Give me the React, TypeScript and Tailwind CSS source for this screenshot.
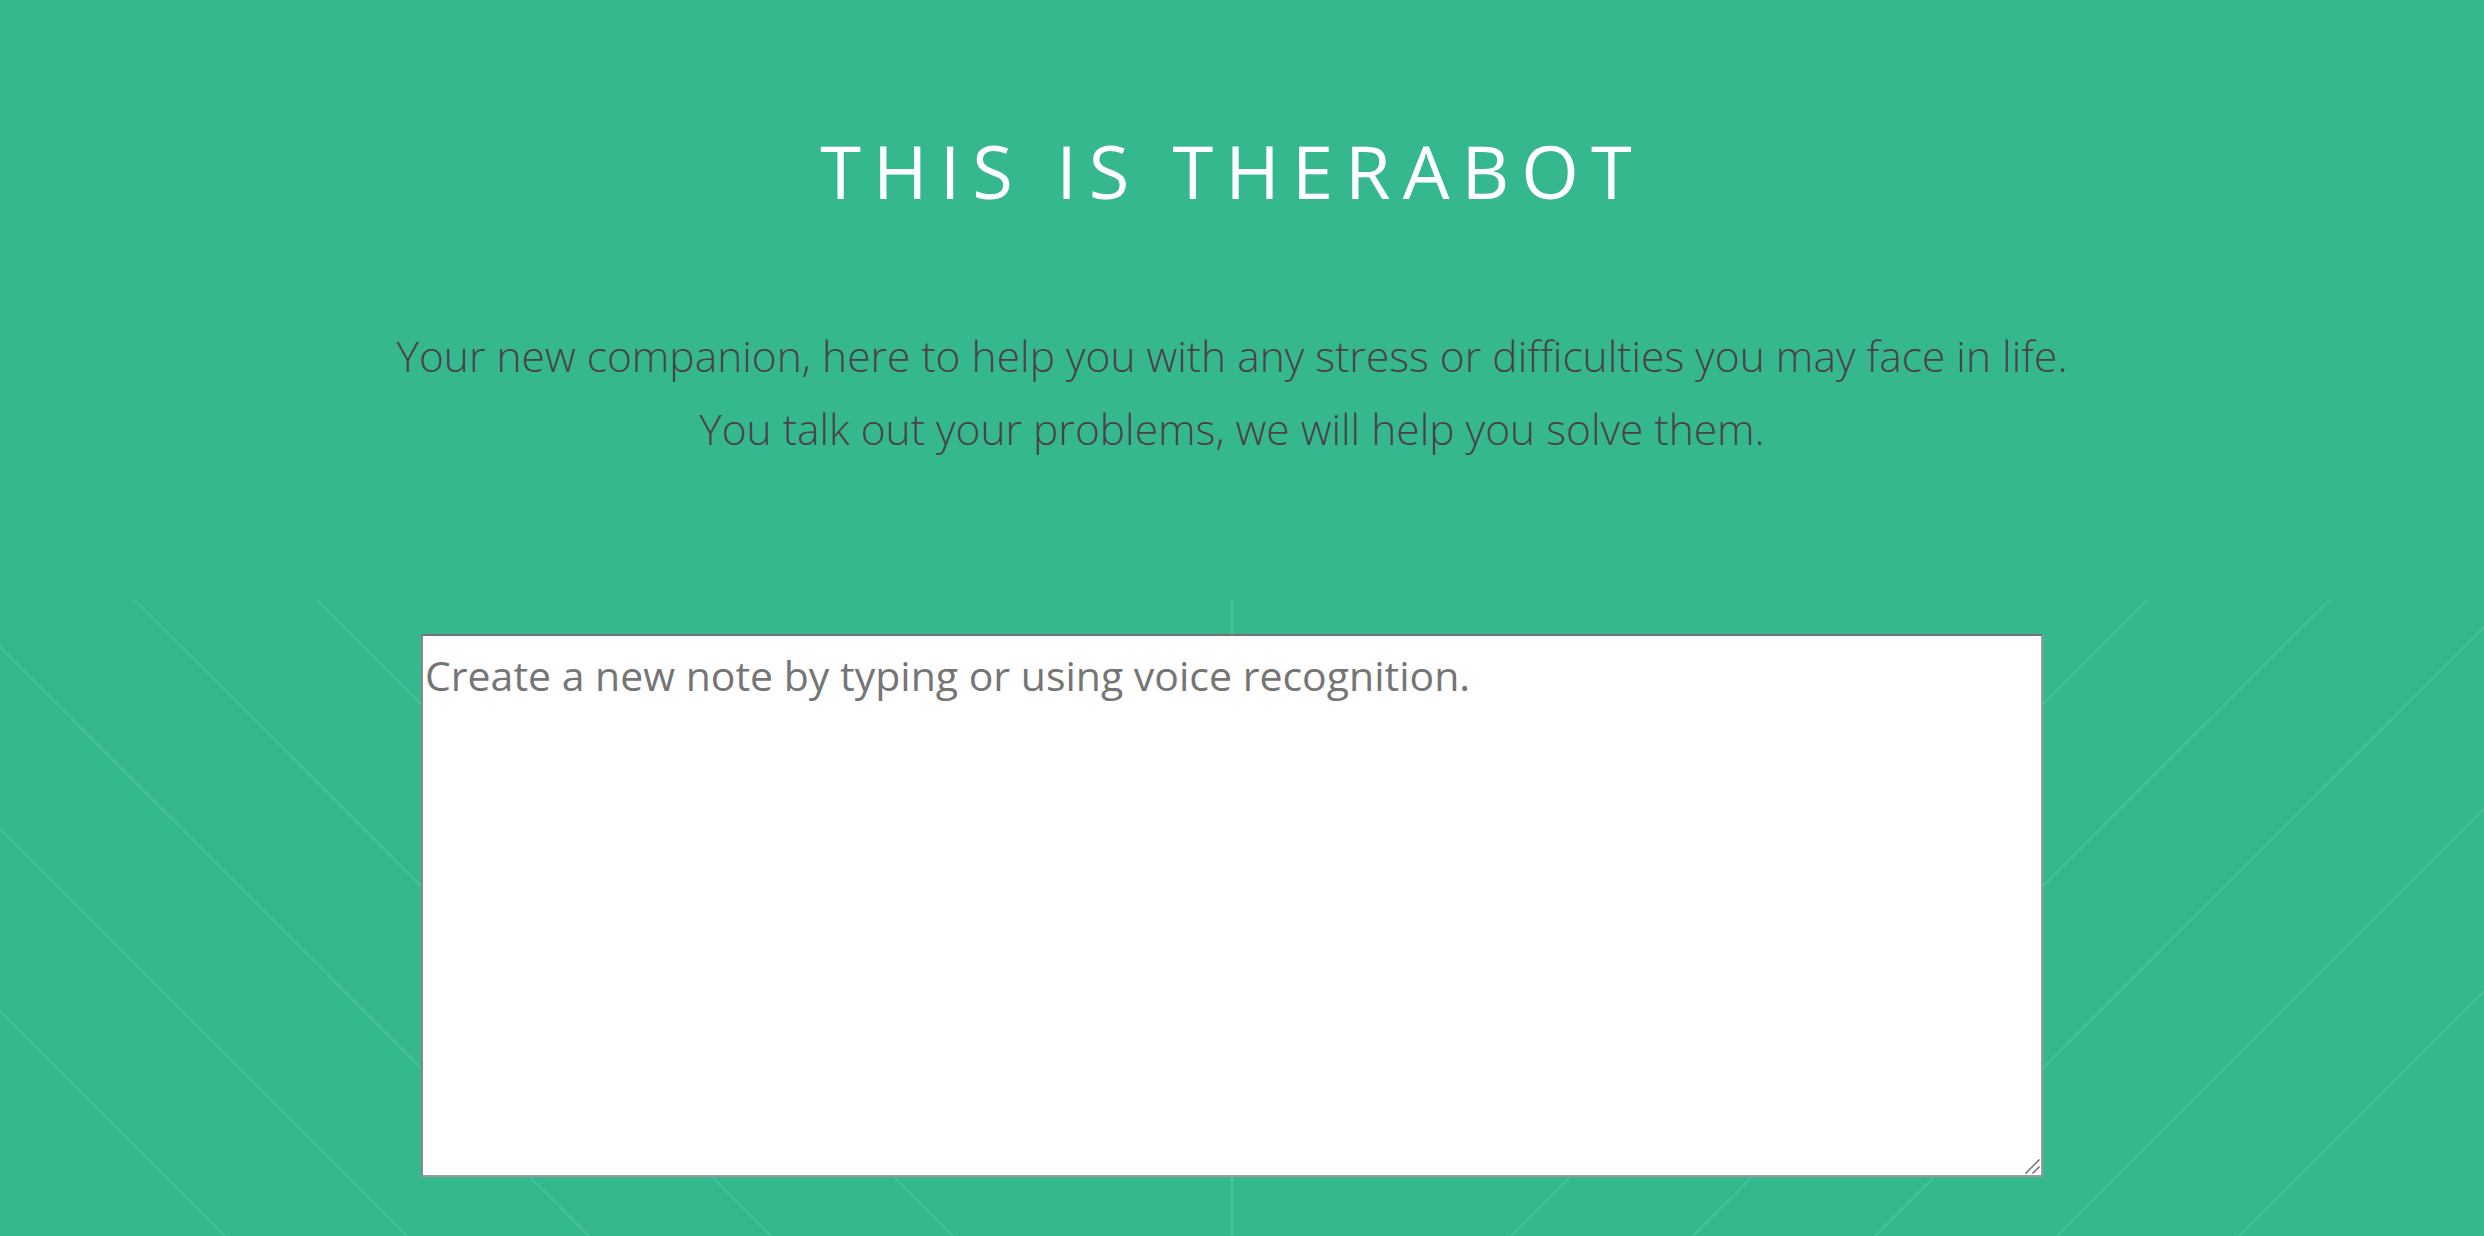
import React from 'react';

// x positions where the diagonal background lines cross the top of the note section
const leftStarts = [-411, -229, -47, 135, 317];
const rightStarts = [2147, 2329, 2511, 2693, 2875];

function LinePattern() {
  return (
    <svg
      className="absolute left-0 top-0 pointer-events-none"
      width={2484}
      height={700}
      viewBox="0 0 2484 700"
      fill="none"
    >
      <g stroke="rgba(255,255,255,0.13)" strokeWidth={1.5}>
        {leftStarts.map((x) => (
          <line key={`l${x}`} x1={x} y1={0} x2={x + 1000} y2={1000} />
        ))}
        {rightStarts.map((x) => (
          <line key={`r${x}`} x1={x} y1={0} x2={x - 1000} y2={1000} />
        ))}
      </g>
      <line x1={1232} y1={0} x2={1232} y2={700} stroke="rgba(255,255,255,0.13)" strokeWidth={2} />
    </svg>
  );
}

export default function App() {
  return (
    <div className="min-h-screen bg-[#36b88f] font-['Open_Sans','Noto_Sans',sans-serif] overflow-hidden">
      <header className="h-[600px] pr-[20px] pt-[134px] text-center">
        <h1 className="text-[74px] leading-[74px] font-normal tracking-[12px] text-white">
          THIS IS THERABOT
        </h1>
        <div className="mt-[111px] text-[42.5px] leading-[73px] font-light text-[#4a4249]">
          <p>Your new companion, here to help you with any stress or difficulties you may face in life.</p>
          <p>You talk out your problems, we will help you solve them.</p>
        </div>
      </header>

      <section className="relative h-[636px] pr-[20px] pt-[34px]">
        <LinePattern />
        <div className="relative mx-auto w-[1622px] h-[543px]">
          <textarea
            className="block w-full h-full resize-none bg-white border-2 border-t-[#737373] border-l-[#888888] border-r-[#9a9a9a] border-b-[#9a9a9a] px-[2px] pt-[11px] text-[41px] leading-[56px] text-[#333] placeholder:text-[#757575] outline-none"
            placeholder="Create a new note by typing or using voice recognition."
          />
          {/* resize grip */}
          <svg className="absolute right-[3px] bottom-[3px] pointer-events-none" width={16} height={16} viewBox="0 0 16 16">
            <g stroke="#6b6b6b" strokeWidth={1.5} strokeLinecap="square">
              <line x1={2} y1={15} x2={15} y2={2} />
              <line x1={9} y1={15} x2={15} y2={9} />
            </g>
          </svg>
        </div>
      </section>
    </div>
  );
}
